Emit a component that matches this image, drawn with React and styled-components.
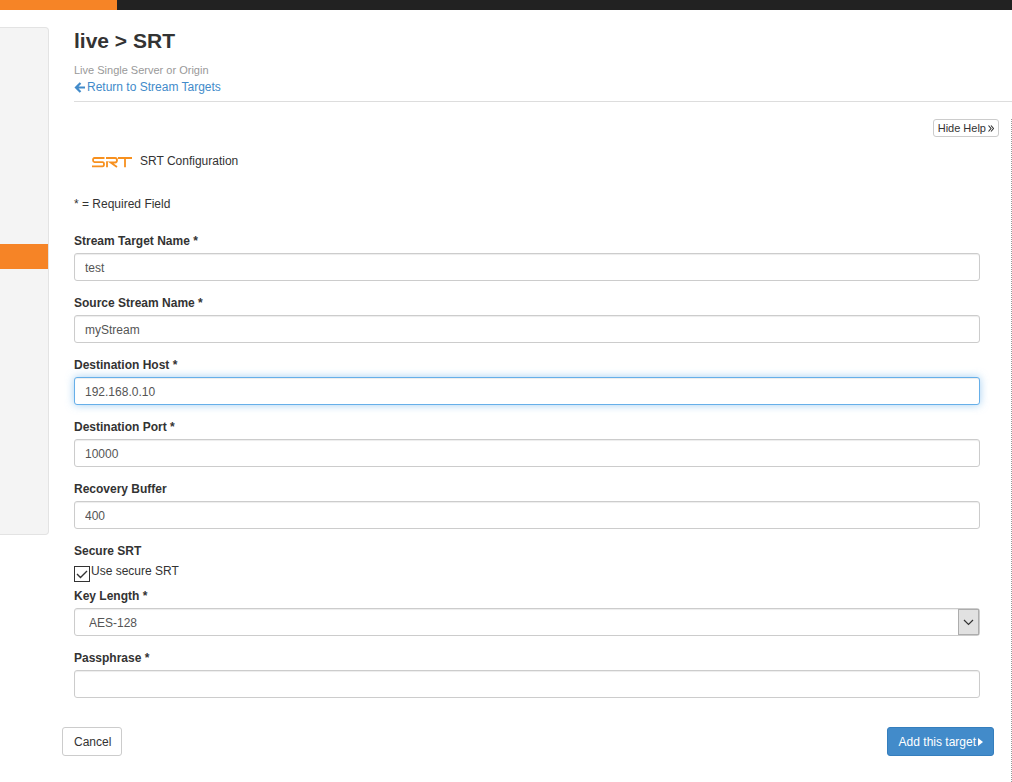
import React, { useState } from 'react'
import styled, { createGlobalStyle } from 'styled-components'

const GlobalStyle = createGlobalStyle`
    * {
        box-sizing: border-box;
    }

    body {
        margin: 0;
        background: white;
        color: #333;
        font-family: "Liberation Sans", Arial, sans-serif;
        font-size: 12px;
        line-height: 17px;
    }

    button, input, select {
        font-family: inherit;
        font-size: 12px;
    }
`

const Page = styled.div`
    min-height: 100vh;
    display: flex;
    flex-direction: column;
`

const TopBar = styled.header`
    height: 10px;
    background: #222;
`

const TopAccent = styled.div`
    width: 117px;
    height: 100%;
    background: #f68426;
`

const Body = styled.div`
    flex: 1;
    display: flex;
    align-items: stretch;
`

const Sidebar = styled.nav`
    flex: none;
    align-self: flex-start;
    width: 49px;
    height: 508px;
    margin-top: 17px;
    padding-top: 216px;
    background: #f4f4f4;
    border: 1px solid #e3e3e3;
    border-left: 0;
    border-radius: 0 4px 4px 0;
`

const ActiveItem = styled.div`
    height: 25px;
    background: #f68426;
`

const Main = styled.main`
    flex: 1;
    min-width: 0;
    display: flex;
    flex-direction: column;
    padding-left: 13px;
`

const PageHeader = styled.div`
    margin-left: 12px;
    padding: 19px 0 5px;
    border-bottom: 1px solid #ddd;
`

const Title = styled.h1`
    margin: 0 0 9px;
    font-size: 21px;
    line-height: 24px;
    font-weight: bold;
`

const Subtitle = styled.p`
    margin: 0;
    color: #999;
    font-size: 11px;
    line-height: 17px;
`

const BackLink = styled.a`
    display: flex;
    align-items: center;
    gap: 2px;
    color: #428bca;
    text-decoration: none;
`

const Content = styled.div`
    flex: 1;
    margin-top: 17px;
    padding-right: 12px;
    border-right: 1px dotted #999;
`

const HelpRow = styled.div`
    display: flex;
    justify-content: flex-end;
`

const Button = styled.button`
    display: flex;
    align-items: center;
    gap: 2px;
    height: 29px;
    padding: 0 10px 0 11px;
    background: ${props => props.$primary ? '#428bca' : 'white'};
    border: 1px solid ${props => props.$primary ? '#357ebd' : '#ccc'};
    border-radius: 3px;
    color: ${props => props.$primary ? 'white' : '#333'};
    cursor: pointer;
`

const SmallButton = styled(Button)`
    height: 18px;
    padding: 0 4px;
    font-size: 11px;
`

const Form = styled.form`
    padding-right: 5px;
`

const Fields = styled.div`
    padding: 0 14px 0 12px;
`

const Heading = styled.div`
    display: flex;
    align-items: center;
    gap: 8px;
    padding: 16px 0 0 17px;
`

const Required = styled.p`
    margin: 26px 0 20px;
`

const Field = styled.div`
    display: flex;
    flex-direction: column;
    gap: 3px;
    margin-bottom: 14px;
`

const Label = styled.label`
    font-weight: bold;
`

const Input = styled.input`
    width: 100%;
    height: 28px;
    padding: 1px 10px 0;
    background: white;
    border: 1px solid #ccc;
    border-radius: 3px;
    box-shadow: inset 0 1px 1px rgba(0, 0, 0, .075);
    color: #555;

    &:focus {
        outline: 0;
        border-color: #66afe9;
        box-shadow: inset 0 1px 1px rgba(0, 0, 0, .075), 0 0 8px rgba(102, 175, 233, .6);
    }
`

const SecureGroup = styled.fieldset`
    margin: 0;
    padding: 0;
    border: 0;
`

const Legend = styled.legend`
    padding: 0;
    font-weight: bold;
`

const CheckRow = styled.div`
    display: flex;
    gap: 1px;
    height: 28px;
    padding-top: 3px;
`

const CheckBoxWrap = styled.span`
    position: relative;
    width: 16px;
    height: 16px;
    margin-top: 3px;

    svg {
        position: absolute;
        inset: 0;
        pointer-events: none;
    }
`

const Checkbox = styled.input`
    appearance: none;
    display: block;
    width: 16px;
    height: 16px;
    margin: 0;
    border: 1px solid #333;
    background: white;
`

const SelectBox = styled.div`
    position: relative;
`

const Select = styled(Input)`
    appearance: none;
    display: block;
    padding: 1px 34px 0 14px;
`

const SelectArrow = styled.span`
    position: absolute;
    top: 1px;
    right: 1px;
    bottom: 1px;
    width: 21px;
    display: flex;
    align-items: center;
    justify-content: center;
    background: #e1e1e1;
    border: 1px solid #adadad;
    pointer-events: none;
`

const Actions = styled.div`
    display: flex;
    justify-content: space-between;
    padding: 15px 0 26px;
`

const SrtLogo = () => (
    <svg width="41" height="12" viewBox="0 0 41 12" fill="none" stroke="#f7901e" strokeWidth="1.8" aria-hidden="true">
        <path d="M13.500 2H3.500Q2 2 2 4T3.500 6.200H11.500Q13 6.200 13 8.200T11.500 10.300H1" />
        <path d="M15 2H24Q26 2 26 4.200T24 6.500H19.500L26 11M16 5.300V11.200" />
        <path d="M27 2H41M34 2V11.200" />
    </svg>
)

const ArrowLeft = () => (
    <svg width="11" height="11" viewBox="0 0 11 11" fill="none" stroke="currentColor" strokeWidth="2.2" aria-hidden="true">
        <path d="M6.500 1L2 5.500L6.500 10M2.500 5.500H11" />
    </svg>
)

const CaretRight = () => (
    <svg width="5" height="8" viewBox="0 0 5 8" fill="currentColor" aria-hidden="true">
        <path d="M0 0L5 4L0 8Z" />
    </svg>
)

const DoubleAngle = () => (
    <svg width="6" height="7" viewBox="0 0 6 7" fill="none" stroke="currentColor" strokeWidth="1.1" aria-hidden="true">
        <path d="M0.500 0.500L3 3.500L0.500 6.500M3 0.500L5.500 3.500L3 6.500" />
    </svg>
)

const TextField = ({ id, label, ...rest }) => (
    <Field>
        <Label htmlFor={id}>{label}</Label>
        <Input id={id} type="text" {...rest} />
    </Field>
)

const App = () => {
    const [secure, setSecure] = useState(true)

    return (
        <Page>
            <GlobalStyle />
            <TopBar><TopAccent /></TopBar>
            <Body>
                <Sidebar><ActiveItem /></Sidebar>
                <Main>
                    <PageHeader>
                        <Title>live &gt; SRT</Title>
                        <Subtitle>Live Single Server or Origin</Subtitle>
                        <BackLink href="#targets"><ArrowLeft />Return to Stream Targets</BackLink>
                    </PageHeader>
                    <Content>
                        <HelpRow>
                            <SmallButton type="button">Hide Help<DoubleAngle /></SmallButton>
                        </HelpRow>
                        <Form onSubmit={e => e.preventDefault()}>
                            <Fields>
                                <Heading><SrtLogo />SRT Configuration</Heading>
                                <Required>* = Required Field</Required>
                                <TextField id="targetName" label="Stream Target Name *" defaultValue="test" />
                                <TextField id="streamName" label="Source Stream Name *" defaultValue="myStream" />
                                <TextField id="host" label="Destination Host *" defaultValue="192.168.0.10" autoFocus />
                                <TextField id="port" label="Destination Port *" defaultValue="10000" />
                                <TextField id="buffer" label="Recovery Buffer" defaultValue="400" />
                                <SecureGroup>
                                    <Legend>Secure SRT</Legend>
                                    <CheckRow>
                                        <CheckBoxWrap>
                                            <Checkbox
                                                id="secure"
                                                type="checkbox"
                                                checked={secure}
                                                onChange={e => setSecure(e.target.checked)}
                                            />
                                            {secure && (
                                                <svg width="16" height="16" viewBox="0 0 16 16" fill="none" stroke="#333" strokeWidth="1.4">
                                                    <path d="M3 8L6.500 11.500L13 5" />
                                                </svg>
                                            )}
                                        </CheckBoxWrap>
                                        <label htmlFor="secure">Use secure SRT</label>
                                    </CheckRow>
                                </SecureGroup>
                                <Field>
                                    <Label htmlFor="keyLength">Key Length *</Label>
                                    <SelectBox>
                                        <Select as="select" id="keyLength" defaultValue="AES-128">
                                            <option>AES-128</option>
                                            <option>AES-192</option>
                                            <option>AES-256</option>
                                        </Select>
                                        <SelectArrow>
                                            <svg width="11" height="7" viewBox="0 0 11 7" fill="none" stroke="#333" strokeWidth="1.2">
                                                <path d="M1 1l4.500 4.500L10 1" />
                                            </svg>
                                        </SelectArrow>
                                    </SelectBox>
                                </Field>
                                <TextField id="passphrase" label="Passphrase *" />
                            </Fields>
                            <Actions>
                                <Button type="button">Cancel</Button>
                                <Button type="submit" $primary>Add this target<CaretRight /></Button>
                            </Actions>
                        </Form>
                    </Content>
                </Main>
            </Body>
        </Page>
    )
}

export default App
